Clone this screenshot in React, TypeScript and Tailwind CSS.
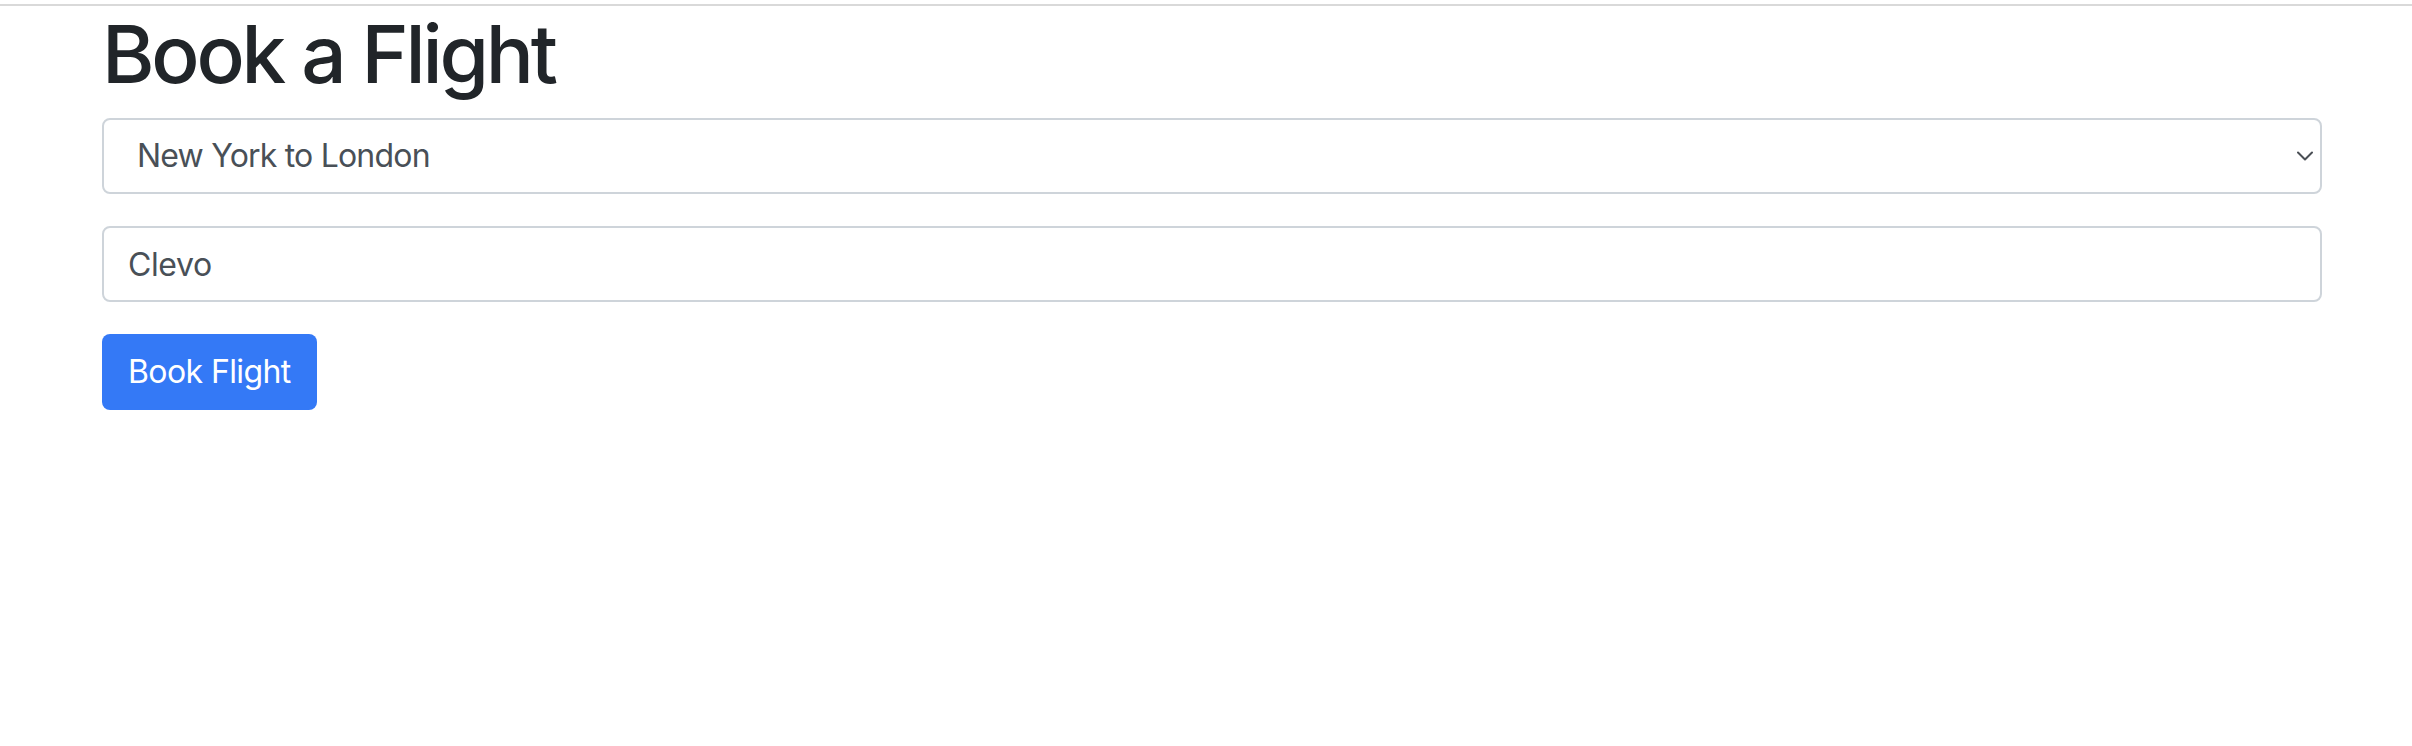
import { useState } from 'react';

const routes = ['New York to London', 'London to Paris', 'Paris to Tokyo'];

export default function App() {
  const [route, setRoute] = useState(routes[0]);
  const [name, setName] = useState('Clevo');

  return (
    <div className="min-h-screen bg-white font-['Inter','Liberation_Sans',sans-serif]">
      <div className="pt-1">
        <div className="h-[2px] bg-[#d9d9d9]" />
      </div>

      <div className="ml-[102px] w-[2220px]">
        <h1 className="mb-4 text-[80px] font-medium leading-[96px] tracking-[-3.2px] text-[#212529]">
          Book a Flight
        </h1>

        <div className="mb-8 relative">
          <select
            value={route}
            onChange={(e) => setRoute(e.target.value)}
            className="block h-[76px] w-full appearance-none rounded-lg border-2 border-[#ced4da] bg-white pl-[33px] pr-12 text-[32px] tracking-[-0.8px] text-[#495057] outline-none"
          >
            {routes.map((r) => (
              <option key={r}>{r}</option>
            ))}
          </select>
          <svg
            className="pointer-events-none absolute right-[9px] top-[33px]"
            width="16"
            height="10"
            viewBox="0 0 16 10"
            fill="none"
          >
            <path d="M1 1.5L8 8.5L15 1.5" stroke="#4a4f55" strokeWidth="2" strokeLinecap="round" strokeLinejoin="round" />
          </svg>
        </div>

        <div className="mb-8">
          <input
            value={name}
            onChange={(e) => setName(e.target.value)}
            className="block h-[76px] w-full rounded-lg border-2 border-[#ced4da] bg-white px-6 text-[32px] tracking-[-0.4px] text-[#495057] outline-none"
          />
        </div>

        <button className="h-[76px] rounded-lg bg-[#3479f6] px-[26px] text-[32px] tracking-[-0.6px] text-white">
          Book Flight
        </button>
      </div>
    </div>
  );
}
